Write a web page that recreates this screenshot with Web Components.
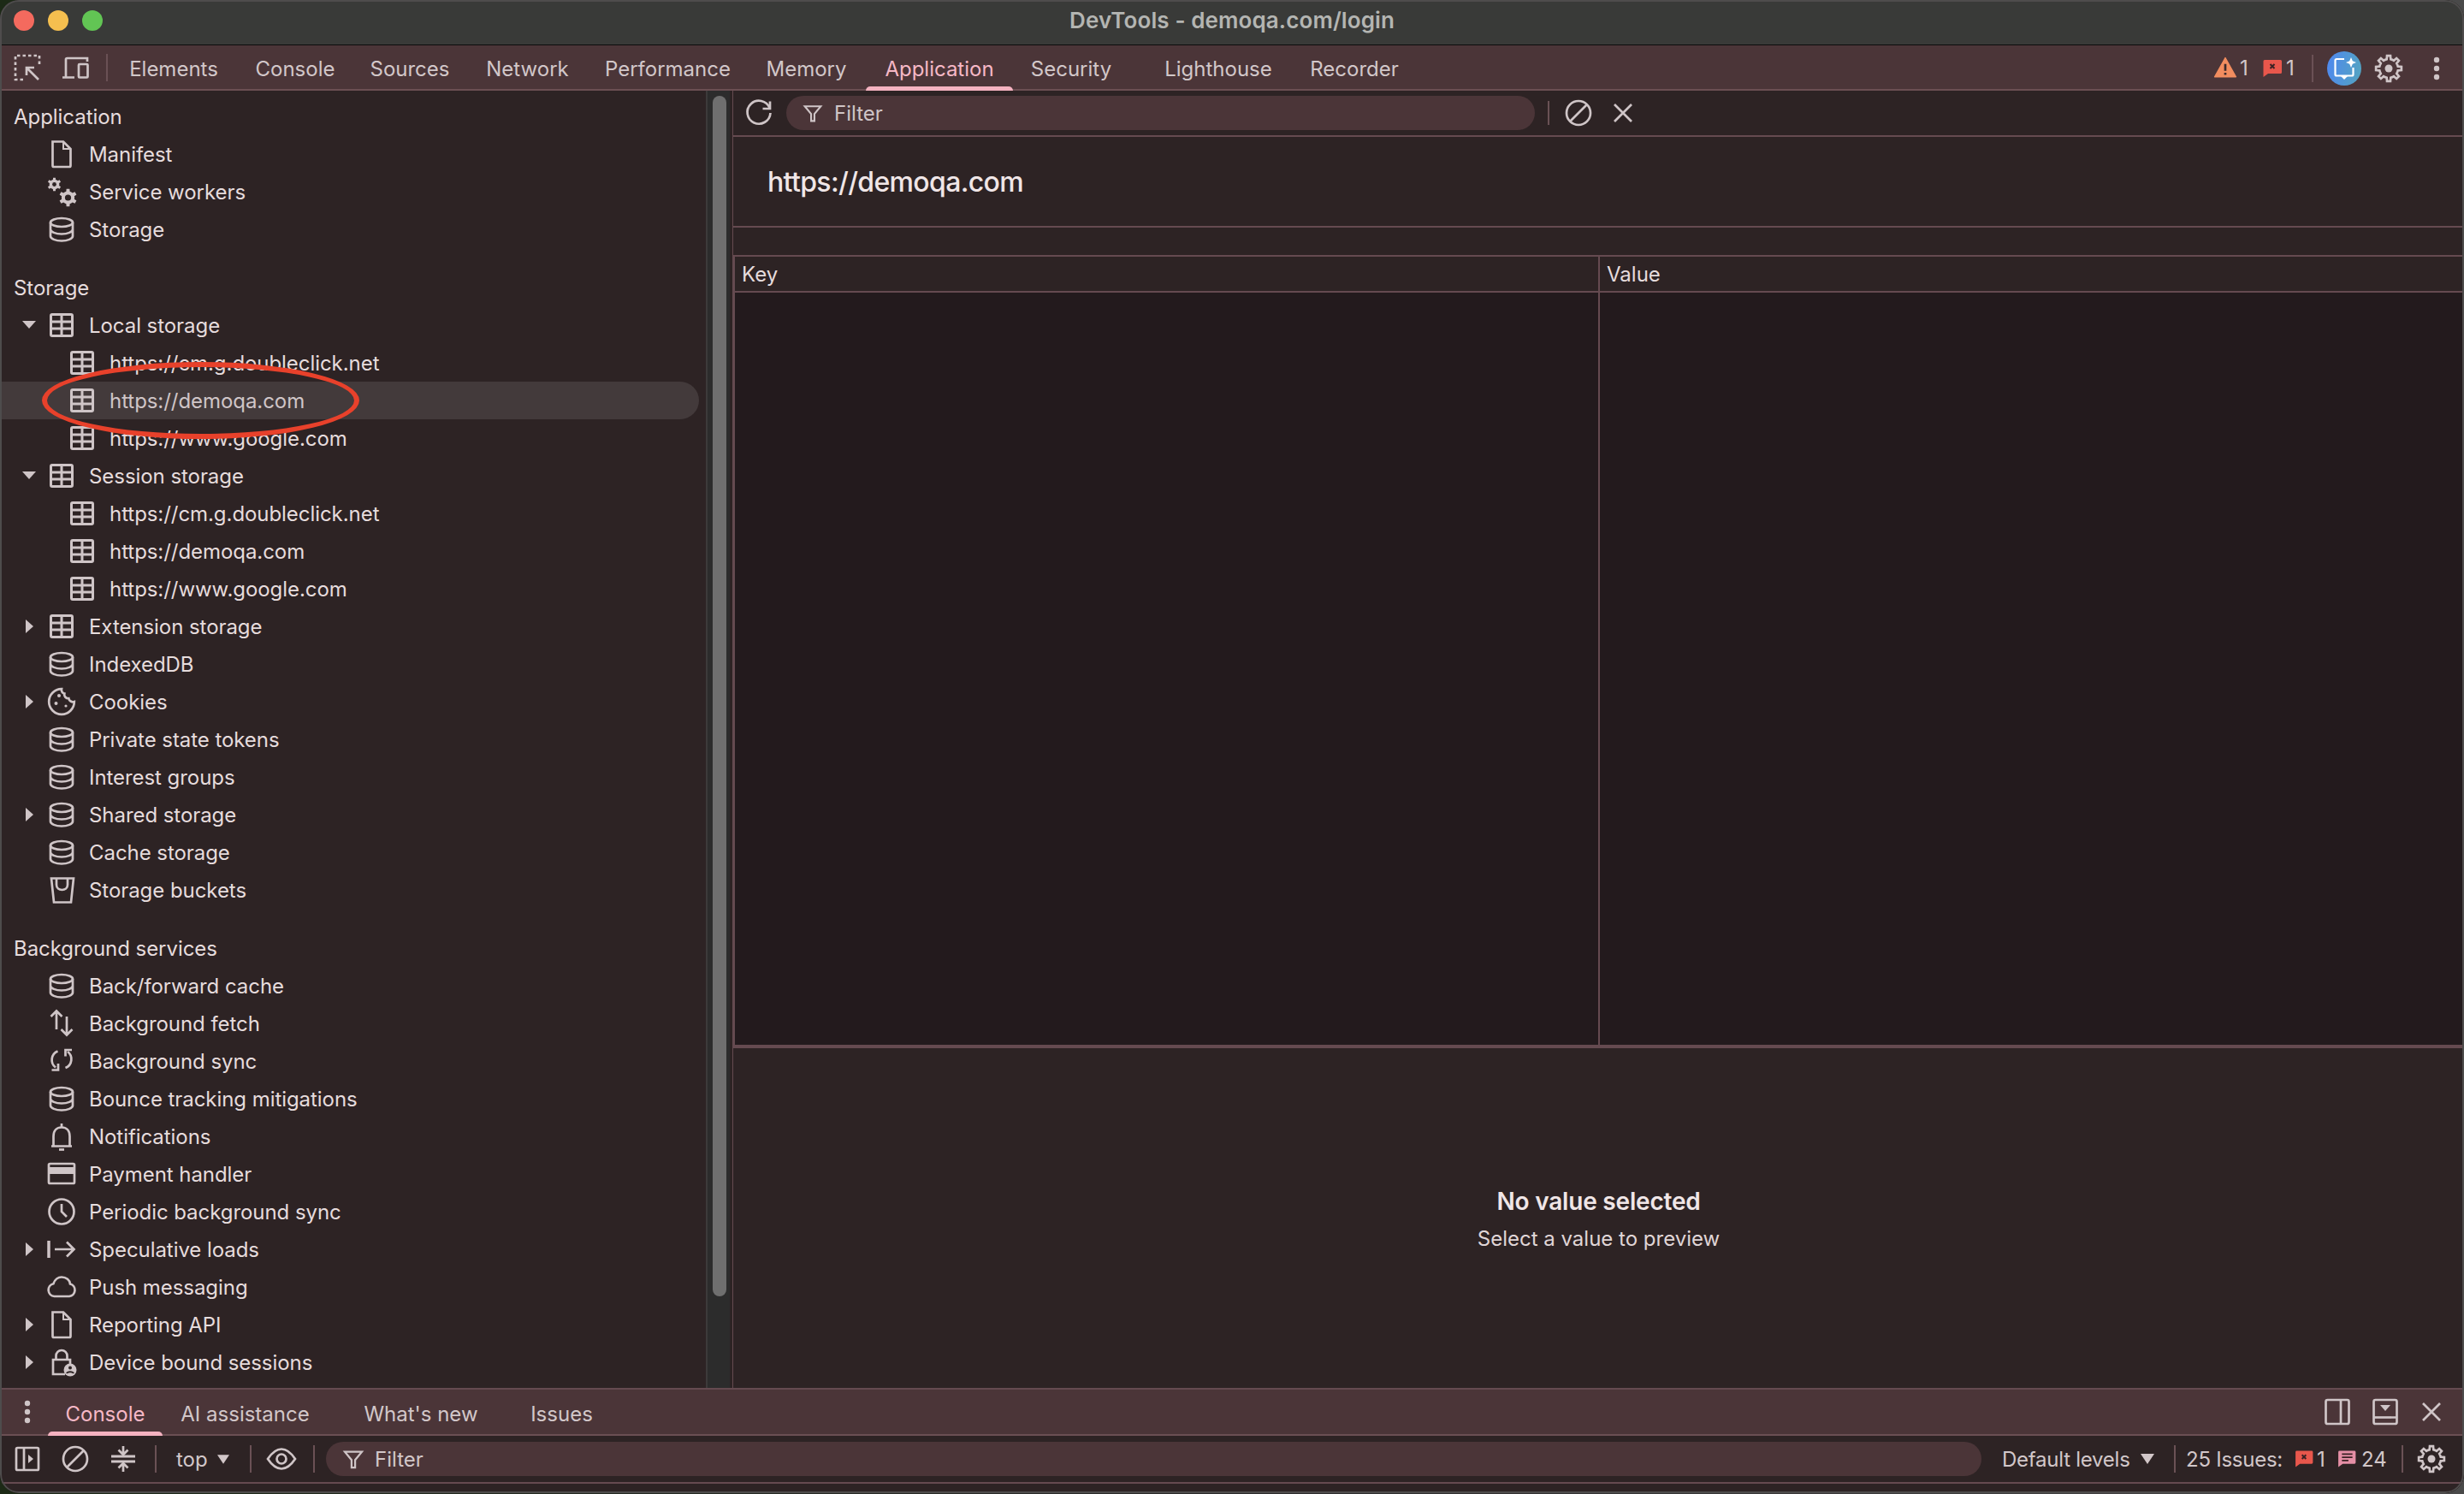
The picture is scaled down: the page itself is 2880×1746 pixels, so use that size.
<!DOCTYPE html>
<html lang="en">
<head>
<meta charset="utf-8">
<title>DevTools - demoqa.com/login</title>
<style>
  html, body { margin: 0; height: 100%; background: linear-gradient(90deg, #1c2a16 0%, #2b2b2b 50%, #4a4a4a 100%); }
  body { font: 24px Inter, "Noto Sans", "Liberation Sans", sans-serif; color: #e6dcdd; }
</style>
</head>
<body>
<dt-window>
  <dt-titlebar>DevTools - demoqa.com/login</dt-titlebar>
  <dt-maintabs></dt-maintabs>
  <dt-main>
    <dt-sidebar>
      <dt-heading>Application</dt-heading>
      <dt-row icon="file">Manifest</dt-row>
      <dt-row icon="gears">Service workers</dt-row>
      <dt-row icon="db">Storage</dt-row>
      <dt-heading gap>Storage</dt-heading>
      <dt-row arrow="down" icon="table">Local storage</dt-row>
      <dt-row level="2" icon="table">https://cm.g.doubleclick.net</dt-row>
      <dt-row level="2" icon="table" selected>https://demoqa.com</dt-row>
      <dt-row level="2" icon="table">https://www.google.com</dt-row>
      <dt-row arrow="down" icon="table">Session storage</dt-row>
      <dt-row level="2" icon="table">https://cm.g.doubleclick.net</dt-row>
      <dt-row level="2" icon="table">https://demoqa.com</dt-row>
      <dt-row level="2" icon="table">https://www.google.com</dt-row>
      <dt-row arrow="right" icon="table">Extension storage</dt-row>
      <dt-row icon="db">IndexedDB</dt-row>
      <dt-row arrow="right" icon="cookie">Cookies</dt-row>
      <dt-row icon="db">Private state tokens</dt-row>
      <dt-row icon="db">Interest groups</dt-row>
      <dt-row arrow="right" icon="db">Shared storage</dt-row>
      <dt-row icon="db">Cache storage</dt-row>
      <dt-row icon="bucket">Storage buckets</dt-row>
      <dt-heading gap>Background services</dt-heading>
      <dt-row icon="db">Back/forward cache</dt-row>
      <dt-row icon="fetch">Background fetch</dt-row>
      <dt-row icon="sync">Background sync</dt-row>
      <dt-row icon="db">Bounce tracking mitigations</dt-row>
      <dt-row icon="bell">Notifications</dt-row>
      <dt-row icon="card">Payment handler</dt-row>
      <dt-row icon="clock">Periodic background sync</dt-row>
      <dt-row arrow="right" icon="spec">Speculative loads</dt-row>
      <dt-row icon="cloud">Push messaging</dt-row>
      <dt-row arrow="right" icon="file">Reporting API</dt-row>
      <dt-row arrow="right" icon="lock">Device bound sessions</dt-row>
    </dt-sidebar>
    <dt-storage origin="https://demoqa.com"></dt-storage>
  </dt-main>
  <dt-drawer></dt-drawer>
</dt-window>

<script>
// all icons are drawn in a 36x36 box, the size attribute scales them
function gearPath(cx, cy, R, r, n) {
  let d = '';
  const step = Math.PI * 2 / n;
  for (let i = 0; i < n; i++) {
    const a = i * step - Math.PI / 2;
    const pts = [[r, a - step * .5], [r, a - step * .27], [R, a - step * .17], [R, a + step * .17], [r, a + step * .27]];
    pts.forEach((p, j) => {
      const x = (cx + p[0] * Math.cos(p[1])).toFixed(2), y = (cy + p[0] * Math.sin(p[1])).toFixed(2);
      d += (i === 0 && j === 0 ? 'M' : 'L') + x + ' ' + y;
    });
  }
  return d + 'Z';
}

const ICONS = {
  file: '<path d="M7.5 3.5h12.5l8.5 8.5v19.5a1.5 1.5 0 0 1-1.5 1.5H9a1.5 1.5 0 0 1-1.5-1.5z"/><path d="M20 3.5V12h8.5" stroke-width="2"/>',
  table: '<rect x="5.5" y="5.5" width="25" height="25" rx="1.5" stroke-width="3"/><path d="M5.5 14h25M5.5 22h25M18 5.5v25" stroke-width="3"/>',
  db: '<ellipse cx="18" cy="10" rx="13" ry="5"/><path d="M5 10v16c0 3 6 5.5 13 5.5S31 29 31 26V10M5 18c0 3 6 5.5 13 5.5S31 21 31 18"/>',
  gears: `<g fill="currentColor" stroke="none"><path d="${gearPath(9.5, 9.5, 8, 5.8, 6)}"/><path d="${gearPath(25.5, 25, 10.5, 7.6, 6)}"/></g><circle cx="9.5" cy="9.5" r="2.4" fill="#2d2324" stroke="none"/><circle cx="25.5" cy="25" r="3.6" fill="#2d2324" stroke="none"/>`,
  cookie: '<path d="M18 3.2A14.8 14.8 0 1 0 32.8 18c-3 1-6-1-6.5-3.8c-3 .3-5.8-2.4-5-5.6c-2.6-.4-3.8-3-3.3-5.4z"/><g fill="currentColor" stroke="none"><circle cx="15" cy="11" r="2"/><circle cx="11.5" cy="20" r="2"/><circle cx="23" cy="23" r="1.6"/></g>',
  bucket: '<path d="M6 4.5h26l-3 28H9zM12 5v7c0 8 13 8 13 0V5"/>',
  fetch: '<path d="M12 3.5V25M5.5 10l6.5-6.5 6.5 6.5M24 10v21.5M17.5 25l6.5 6.5 6.5-6.5"/>',
  sync: '<path d="M13.5 6.5A11 11 0 0 0 11 25.5M22.5 26A11 11 0 0 0 25 7"/><path d="M6.5 28.5h7.5V21M30 5h-7.500v7.5"/>',
  bell: '<path d="M8.5 29V18c0-7 4-10.5 9.5-10.5S27.5 11 27.5 18v11M6 29.5h24"/><path d="M18 3v4"/><path d="M15 33.5h6"/>',
  card: '<rect x="3" y="6" width="30" height="23" rx="1.5"/><rect x="3" y="10" width="30" height="8" fill="currentColor" stroke="none"/>',
  clock: '<circle cx="18" cy="18" r="14.5"/><path d="M18 9v9l6 6"/>',
  spec: '<path d="M3 8v20" stroke-width="3.5"/><path d="M10 18h22M24 9.5l8.500 8.500-8.500 8.500"/>',
  cloud: '<path d="M9.5 29a7.5 7.5 0 0 1-1-14.800C10 9.5 14 6.5 18 6.5c5.5 0 9.5 3.5 10 8a7.4 7.4 0 0 1-1 14.500z"/>',
  lock: '<path d="M22 32H8V15h20v5M11.5 15v-4.500a6.5 6.5 0 0 1 13 0V15"/><circle cx="28" cy="27" r="7.5" fill="currentColor" stroke="none"/><circle cx="28" cy="24.5" r="2" fill="#2d2324" stroke="none"/><path d="M24 31c1-2.5 7-2.5 8 0" stroke="#2d2324" stroke-width="2"/>',
  inspect: '<path d="M32 14V4H4v28h10" stroke-dasharray="3.5 3"/><path d="M17 18l14 14M17 27v-9h9"/>',
  device: '<path d="M7 29V8.5A1.5 1.5 0 0 1 8.5 7H32v4M3 29.5h14"/><rect x="22" y="14" width="10.5" height="15.5" rx="1"/>',
  refresh: '<path d="M30.5 12A13.5 13.5 0 1 0 31.5 18"/><path d="M31 4.5V13h-8.500"/>',
  funnel: '<path d="M6 8h24L20.5 19.5V30h-5V19.5z"/>',
  block: '<circle cx="18" cy="18" r="14"/><path d="M8 28L28 8"/>',
  close: '<path d="M8 8l20 20M28 8L8 28"/>',
  gear: `<path d="${gearPath(18, 18, 15, 11, 8)}"/><circle cx="18" cy="18" r="4.5" fill="currentColor" stroke="none"/>`,
  dots: '<g fill="currentColor" stroke="none"><circle cx="18" cy="8" r="3.2"/><circle cx="18" cy="18" r="3.2"/><circle cx="18" cy="28" r="3.2"/></g>',
  eye: '<path d="M2 18C8 9 13 6.5 18 6.5S28 9 34 18c-6 9-11 11.500-16 11.500S8 27 2 18z"/><circle cx="18" cy="18" r="5.5"/>',
  collapse: '<path d="M4 15h28M4 21h28" stroke-width="3"/><path d="M18 3v9M12.5 7.5l5.5 5.500 5.500-5.500M18 33v-9M12.5 28.500l5.500-5.500 5.500 5.500"/>',
  panel: '<rect x="5" y="5" width="26" height="26" rx="1.5"/><path d="M14 5v26"/><path d="M19 13l6 5-6 5z" fill="currentColor" stroke="none"/>',
  dockside: '<rect x="4.5" y="4" width="27" height="28" rx="2"/><path d="M22 4v28"/>',
  dockbottom: '<rect x="4.5" y="4" width="27" height="28" rx="2"/><path d="M4.5 24.500h27"/><path d="M12 10h12l-6 7z" fill="currentColor" stroke="none"/>',
  warn: '<path d="M18 4L32 29H4z" fill="#f28d5f" stroke="#f28d5f" stroke-width="1.5" stroke-linejoin="round"/><path d="M18 12v9M18 23.5v3" stroke="#3a2a2c" stroke-width="3"/>',
  errmsg: '<path d="M9 8h18.500a1.5 1.5 0 0 1 1.5 1.5v13a1.5 1.5 0 0 1-1.5 1.5H13l-5.500 4V9.5A1.5 1.5 0 0 1 9 8z" fill="#e8574c" stroke="none"/><path d="M15.5 13l5 5M20.5 13l-5 5" stroke="#3a2224" stroke-width="2"/>',
  infomsg: '<path d="M9 8h18.500a1.5 1.5 0 0 1 1.5 1.5v13a1.5 1.5 0 0 1-1.5 1.5H13l-5.500 4V9.5A1.5 1.5 0 0 1 9 8z" fill="#e58fa6" stroke="none"/><path d="M12 12h13M12 16h13M12 20h8" stroke="#3a2224" stroke-width="2"/>'
};

class DtIcon extends HTMLElement {
  connectedCallback() {
    const size = this.getAttribute('size') || 36;
    this.attachShadow({ mode: 'open' });
    this.shadowRoot.innerHTML = `
      <style>
        :host { display: block; flex: none; width: ${size}px; height: ${size}px; color: #cfc5c7; }
        svg { display: block; fill: none; stroke: currentColor; stroke-width: 2.7; }
      </style>
      <svg width="${size}" height="${size}" viewBox="0 0 36 36">${ICONS[this.getAttribute('name')] || ''}</svg>`;
  }
}

class DtWindow extends HTMLElement {
  constructor() {
    super();
    this.attachShadow({ mode: 'open' });
    this.shadowRoot.innerHTML = `
      <style>
        :host { display: flex; flex-direction: column; box-sizing: border-box; width: 2880px; height: 1745px;
          overflow: hidden; border-radius: 22px; background: #2d2324; position: relative; }
        .edge { position: absolute; inset: 0; border: 2px solid #4e4c4c; border-radius: 22px; pointer-events: none; }
      </style>
      <slot></slot>
      <div class="edge"></div>`;
  }
}

class DtTitlebar extends HTMLElement {
  constructor() {
    super();
    this.attachShadow({ mode: 'open' });
    this.shadowRoot.innerHTML = `
      <style>
        :host { display: flex; align-items: center; flex: none; position: relative; box-sizing: border-box; height: 53px; background: #393a38;
          border-bottom: 1px solid #0c0c0c; justify-content: center; color: #b4b5b2; font-size: 26px; font-weight: 600;
          letter-spacing: .1px; padding-bottom: 5px; }
        .lights { position: absolute; left: 16px; top: 12px; display: flex; gap: 16px; }
        .lights i { display: block; width: 24px; height: 24px; border-radius: 50%; }
      </style>
      <div class="lights"><i style="background:#f46a5e"></i><i style="background:#f5bf4f"></i><i style="background:#62c554"></i></div>
      <slot></slot>`;
  }
}

class DtTab extends HTMLElement {
  constructor() {
    super();
    this.attachShadow({ mode: 'open' });
    this.shadowRoot.innerHTML = `
      <style>
        :host { display: flex; align-items: center; justify-content: center; position: relative; box-sizing: border-box; flex: none;
          height: 100%; color: #d2c7c9; white-space: nowrap; font-size: 24px; padding-top: 4px; }
        :host([active]) { color: #f6b8c6; }
        :host([active])::after { content: ""; position: absolute; left: 0; right: 0; bottom: -2px; height: 5px;
          background: #f4b2c0; border-radius: 5px 5px 0 0; }
      </style>
      <slot></slot>`;
  }
}

class DtDivider extends HTMLElement {
  constructor() {
    super();
    this.attachShadow({ mode: 'open' });
    this.shadowRoot.innerHTML = `
      <style>:host { display: block; flex: none; width: 2px; height: 32px; background: #6a5155; }</style>`;
  }
}

class DtMainTabs extends HTMLElement {
  constructor() {
    super();
    const tabs = [['Elements', 148, 0], ['Console', 136, 0], ['Sources', 132, 0], ['Network', 143, 0], ['Performance', 185, 0],
      ['Memory', 139, 0], ['Application', 172, 0], ['Security', 136, 20], ['Lighthouse', 168, 0], ['Recorder', 150, 0]];
    this.attachShadow({ mode: 'open' });
    this.shadowRoot.innerHTML = `
      <style>
        :host { display: flex; align-items: center; flex: none; height: 51px; background: #4b3538; border-bottom: 2px solid #6b4f53; }
        .tabs { display: flex; height: 100%; }
        .right { margin-left: auto; display: flex; align-items: center; height: 100%; color: #d2c7c9; padding-top: 2px; box-sizing: border-box; }
        .count { flex: none; }
        .ai { width: 40px; height: 40px; border-radius: 50%; display: flex; align-items: center; justify-content: center;
          background: linear-gradient(100deg, #4f87f0, #53a5bf); margin-left: 16px; }
      </style>
      <dt-icon name="inspect" style="margin-left:14px"></dt-icon>
      <dt-icon name="device" style="margin-left:20px"></dt-icon>
      <dt-divider style="margin-left:18px;margin-right:3px"></dt-divider>
      <div class="tabs">${tabs.map(t => `<dt-tab ${t[0] === 'Application' ? 'active' : ''} style="width:${t[1]}px;${t[2] ? `margin-right:${t[2]}px` : ''}">${t[0]}</dt-tab>`).join('')}</div>
      <div class="right">
        <dt-icon name="warn" size="32"></dt-icon><span class="count" style="margin-left:1px;width:20px">1</span>
        <dt-icon name="errmsg"></dt-icon><span class="count" style="margin-left:-2px;width:14px">1</span>
        <dt-divider style="margin-left:16px"></dt-divider>
        <div class="ai"><svg width="30" height="30" viewBox="0 0 30 30" fill="none" stroke="#fff" stroke-width="2.2"><path d="M15 4H6a1.5 1.5 0 0 0-1.5 1.5V22A1.5 1.5 0 0 0 6 23.5h18a1.5 1.5 0 0 0 1.5-1.5V14"/><path d="M11 24h8l-4 4z" fill="#fff" stroke="none"/><path d="M23 2l1.8 4.2L29 8l-4.2 1.8L23 14l-1.8-4.2L17 8l4.2-1.8z" fill="#fff" stroke="none"/></svg></div>
        <dt-icon name="gear" style="margin-left:14px"></dt-icon>
        <dt-icon name="dots" style="margin-left:20px;margin-right:14px"></dt-icon>
      </div>`;
  }
}

class DtMain extends HTMLElement {
  constructor() {
    super();
    this.attachShadow({ mode: 'open' });
    this.shadowRoot.innerHTML = `
      <style>:host { display: flex; flex: 1; min-height: 0; }</style>
      <slot></slot>`;
  }
}

class DtSidebar extends HTMLElement {
  constructor() {
    super();
    this.attachShadow({ mode: 'open' });
    this.shadowRoot.innerHTML = `
      <style>
        :host { display: flex; flex: none; width: 856px; position: relative; background: #2d2324; overflow: hidden; }
        .tree { width: 825px; box-sizing: border-box; padding: 8px 8px 0 0; overflow: hidden; }
        .track { flex: none; width: 28px; box-sizing: border-box; display: flex; justify-content: center;
          padding: 6px 4px 0 6px; background: #2c2c2c; border-left: 2px solid #3d3a3a; }
        .thumb { width: 16px; height: 1403px; border-radius: 8px; background: #6f6f6f; }
        .gap { flex: 1; background: #2d2324; }
        .mark { position: absolute; left: 49px; top: 317px; width: 371px; height: 90px; box-sizing: border-box;
          border: 6px solid #e8412b; border-radius: 50%; pointer-events: none; }
      </style>
      <div class="tree"><slot></slot></div>
      <div class="track"><div class="thumb"></div></div>
      <div class="gap"></div>
      <div class="mark"></div>`;
  }
}

class DtHeading extends HTMLElement {
  constructor() {
    super();
    this.attachShadow({ mode: 'open' });
    this.shadowRoot.innerHTML = `
      <style>
        :host { display: flex; align-items: center; height: 44px; padding-left: 16px; color: #e6dcdd; white-space: nowrap; letter-spacing: -.05px; }
        :host([gap]) { margin-top: 24px; }
      </style>
      <slot></slot>`;
  }
}

class DtRow extends HTMLElement {
  connectedCallback() {
    const arrow = this.getAttribute('arrow');
    const tri = arrow === 'down' ? 'M0 3h16l-8 9z' : arrow === 'right' ? 'M4 0l9 8-9 8z' : '';
    this.attachShadow({ mode: 'open' });
    this.shadowRoot.innerHTML = `
      <style>
        :host { display: flex; align-items: center; height: 44px; padding-left: 26px; white-space: nowrap; color: #e6dcdd; letter-spacing: -.06px; }
        :host([level="2"]) { padding-left: 50px; }
        :host([selected]) { background: #433a3b; border-radius: 0 22px 22px 0; color: #cfc5c7; }
        .arrow { flex: none; width: 28px; height: 16px; display: block; }
        .label { margin-left: 14px; }
      </style>
      <svg class="arrow" viewBox="0 0 28 16" fill="#cfc5c7"><path d="${tri}"/></svg>
      <dt-icon name="${this.getAttribute('icon')}"></dt-icon>
      <span class="label"><slot></slot></span>`;
  }
}

class DtStorage extends HTMLElement {
  connectedCallback() {
    this.attachShadow({ mode: 'open' });
    this.shadowRoot.innerHTML = `
      <style>
        :host { display: flex; flex-direction: column; flex: 1; min-width: 0; box-sizing: border-box; background: #2d2324;
          border-left: 1px solid #654a50; }
        .bar { display: flex; align-items: center; flex: none; height: 52px; border-bottom: 2px solid #654a50; color: #cfc5c7; }
        .pill { flex: none; width: 875px; height: 40px; margin-left: 14px; border-radius: 20px; background: #4b3538;
          display: flex; align-items: center; box-sizing: border-box; padding-left: 17px; gap: 11px; color: #cfc5c7; }
        .head { flex: none; height: 106px; display: flex; align-items: center; padding: 0 0 0 40px; box-sizing: border-box;
          font-size: 32px; font-weight: 500; color: #f0e6e7; border-bottom: 2px solid #654a50; letter-spacing: -.65px; }
        .table { flex: none; margin-top: 32px; height: 927px; box-sizing: border-box; border-top: 2px solid #654a50;
          border-bottom: 4px solid #654a50; border-left: 2px solid #654a50; display: grid;
          grid-template-columns: 1011px 1fr; grid-template-rows: 42px 1fr; }
        .th { display: flex; align-items: center; padding-left: 8px; border-bottom: 2px solid #654a50; color: #e6dcdd; }
        .td { background: #231a1d; }
        .sep { border-right: 2px solid #654a50; }
        .empty { flex: 1; display: flex; flex-direction: column; align-items: center; justify-content: center; padding-top: 2px; }
        .empty b { font-size: 28px; font-weight: 600; color: #f0e6e7; margin-bottom: 12px; letter-spacing: -.2px; }
        .empty span { color: #e0d6d7; }
      </style>
      <div class="bar">
        <dt-icon name="refresh" style="margin-left:12px"></dt-icon>
        <div class="pill"><dt-icon name="funnel" size="28"></dt-icon><span>Filter</span></div>
        <dt-divider style="margin-left:15px;height:28px"></dt-divider>
        <dt-icon name="block" style="margin-left:16px"></dt-icon>
        <dt-icon name="close" style="margin-left:16px"></dt-icon>
      </div>
      <div class="head">${this.getAttribute('origin')}</div>
      <div class="table">
        <div class="th sep">Key</div><div class="th">Value</div>
        <div class="td sep"></div><div class="td"></div>
      </div>
      <div class="empty"><b>No value selected</b><span>Select a value to preview</span></div>`;
  }
}

class DtDrawer extends HTMLElement {
  constructor() {
    super();
    const tabs = [['Console', 134, 'active'], ['AI assistance', 193, ''], ['What\'s new', 218, ''], ['Issues', 111, '']];
    this.attachShadow({ mode: 'open' });
    this.shadowRoot.innerHTML = `
      <style>
        :host { display: block; flex: none; background: #2d2324; border-top: 2px solid #654a50; padding-bottom: 11px; }
        .tabs { display: flex; align-items: center; height: 52px; background: #4b3538; border-bottom: 2px solid #6b4f53; }
        .tools { display: flex; align-items: center; height: 54px; border-bottom: 2px solid #654a50; color: #d2c7c9; white-space: nowrap; }
        .pill { flex: 1; height: 40px; margin: 0 24px 0 13px; border-radius: 20px; background: #4b3538; display: flex; align-items: center;
          box-sizing: border-box; padding-left: 17px; gap: 10px; }
        .tri { flex: none; display: block; }
        .right { margin-left: auto; display: flex; align-items: center; height: 100%; }
        .fix { flex: none; }
      </style>
      <div class="tabs">
        <dt-icon name="dots" style="margin-left:14px;margin-right:6px"></dt-icon>
        ${tabs.map(t => `<dt-tab ${t[2]} style="width:${t[1]}px">${t[0]}</dt-tab>`).join('')}
        <div class="right">
          <dt-icon name="dockside" style="margin-right:20px"></dt-icon>
          <dt-icon name="dockbottom" style="margin-right:18px"></dt-icon>
          <dt-icon name="close" style="margin-right:20px"></dt-icon>
        </div>
      </div>
      <div class="tools">
        <dt-icon name="panel" style="margin-left:14px"></dt-icon>
        <dt-icon name="block" style="margin-left:20px"></dt-icon>
        <dt-icon name="collapse" style="margin-left:20px"></dt-icon>
        <dt-divider style="margin-left:19px"></dt-divider>
        <span class="fix" style="margin-left:23px;width:37px">top</span>
        <svg class="tri" style="margin-left:11px" width="14" height="11" viewBox="0 0 16 12" fill="#d2c7c9"><path d="M0 0h16l-8 12z"/></svg>
        <dt-divider style="margin-left:24px"></dt-divider>
        <dt-icon name="eye" style="margin-left:17px"></dt-icon>
        <dt-divider style="margin-left:19px"></dt-divider>
        <div class="pill"><dt-icon name="funnel" size="30"></dt-icon><span>Filter</span></div>
        <span class="fix" style="width:152px;letter-spacing:-.25px">Default levels</span>
        <svg class="tri" style="margin-left:10px" width="16" height="12" viewBox="0 0 16 12" fill="#d2c7c9"><path d="M0 0h16l-8 12z"/></svg>
        <dt-divider style="margin-left:23px"></dt-divider>
        <span class="fix" style="margin-left:12px;width:113px;letter-spacing:-.25px">25 Issues:</span>
        <dt-icon name="errmsg" size="34" style="margin-left:8px"></dt-icon><span class="fix" style="margin-left:-2px;width:18px">1</span>
        <dt-icon name="infomsg" size="34"></dt-icon><span class="fix" style="width:29px">24</span>
        <dt-divider style="margin-left:18px"></dt-divider>
        <dt-icon name="gear" style="margin-left:15px;margin-right:20px"></dt-icon>
      </div>`;
  }
}

customElements.define('dt-icon', DtIcon);
customElements.define('dt-window', DtWindow);
customElements.define('dt-titlebar', DtTitlebar);
customElements.define('dt-tab', DtTab);
customElements.define('dt-divider', DtDivider);
customElements.define('dt-maintabs', DtMainTabs);
customElements.define('dt-main', DtMain);
customElements.define('dt-sidebar', DtSidebar);
customElements.define('dt-heading', DtHeading);
customElements.define('dt-row', DtRow);
customElements.define('dt-storage', DtStorage);
customElements.define('dt-drawer', DtDrawer);
</script>
</body>
</html>
